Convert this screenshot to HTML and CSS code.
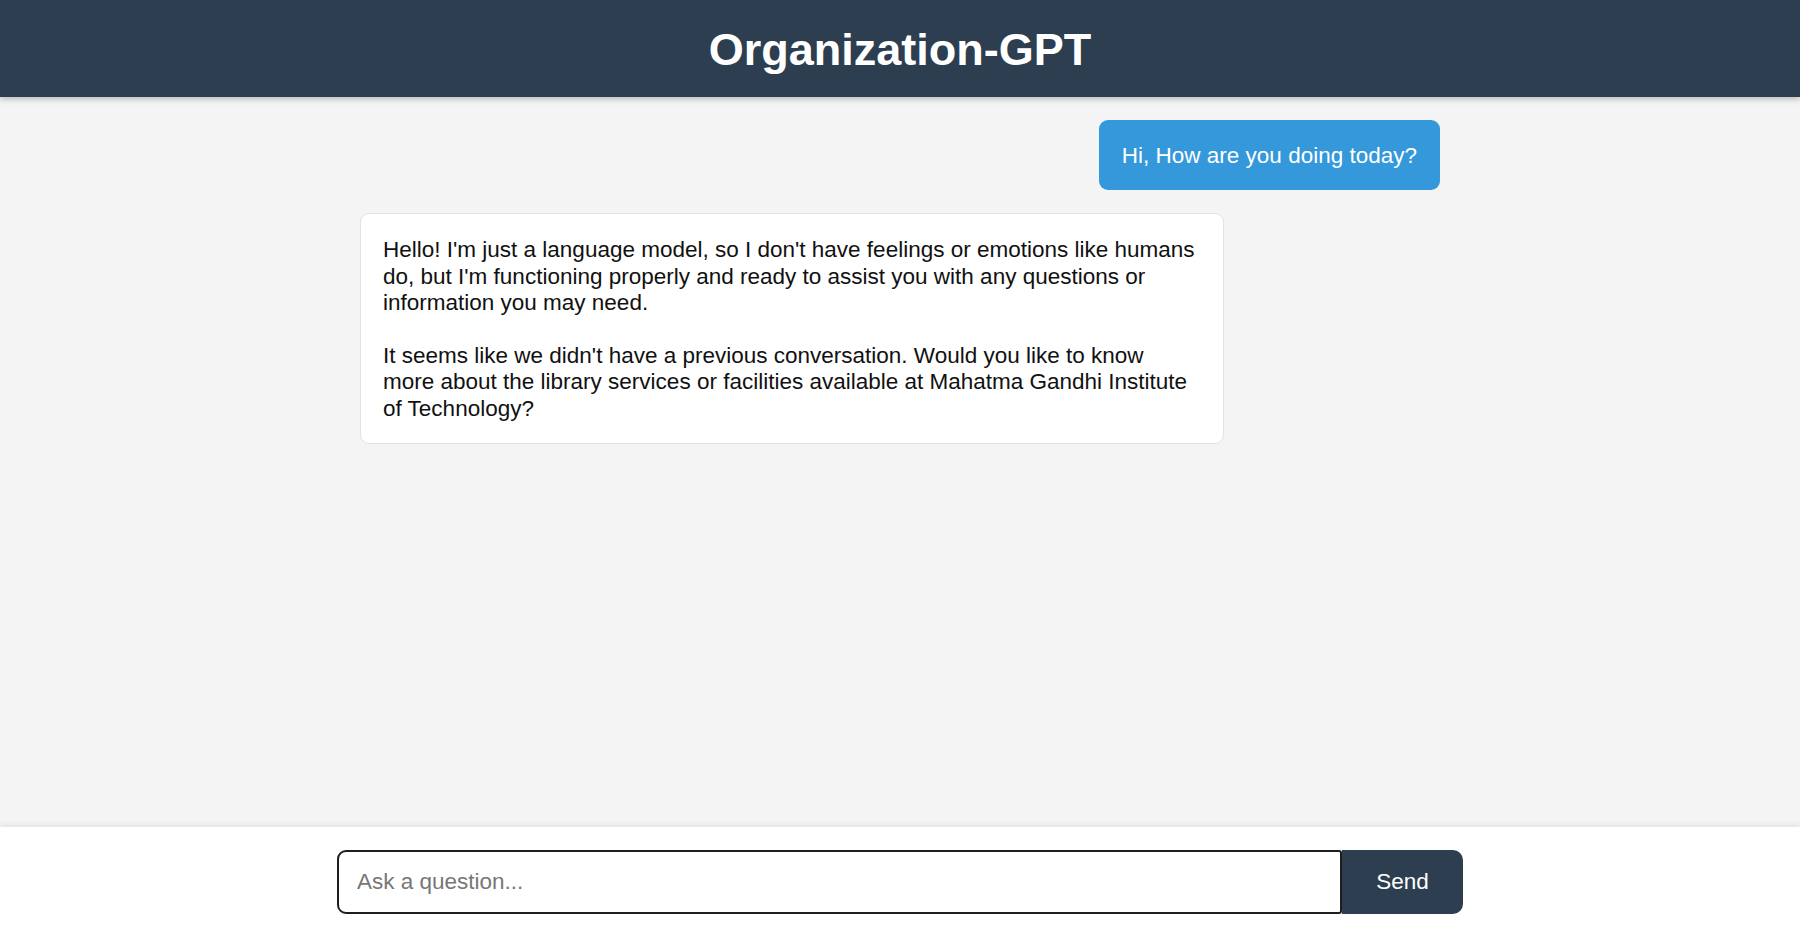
FILE: index.html
```html
<!DOCTYPE html>
<html lang="en">
<head>
<meta charset="utf-8">
<title>Organization-GPT</title>
<link rel="stylesheet" href="styles.css">
</head>
<body>
<div class="app">
  <header class="header">
    <h1 class="title">Organization-GPT</h1>
  </header>
  <main class="chat">
    <div class="messages">
      <div class="msg msg-user">Hi, How are you doing today?</div>
      <div class="msg msg-bot">
        <p>Hello! I'm just a language model, so I don't have feelings or emotions like humans do, but I'm functioning properly and ready to assist you with any questions or information you may need.</p>
        <p>It seems like we didn't have a previous conversation. Would you like to know more about the library services or facilities available at Mahatma Gandhi Institute of Technology?</p>
      </div>
    </div>
  </main>
  <footer class="composer">
    <form class="form">
      <input class="input" type="text" placeholder="Ask a question...">
      <button class="send" type="button">Send</button>
    </form>
  </footer>
</div>
</body>
</html>
```
FILE: styles.css
```css
* { box-sizing: border-box; }
html, body { margin: 0; padding: 0; height: 100%; }
body {
  font-family: Arial, "Liberation Sans", Helvetica, sans-serif;
  background: #f4f4f4;
  color: #111;
}
.app {
  height: 930px;
  display: flex;
  flex-direction: column;
}
.header {
  flex: 0 0 97px;
  background: #2c3e50;
  display: flex;
  align-items: center;
  justify-content: center;
  box-shadow: 0 2px 6px rgba(0,0,0,0.25);
  position: relative;
  z-index: 2;
}
.title {
  margin: 0;
  color: #fff;
  font-size: 45px;
  font-weight: bold;
  line-height: 1;
  padding-top: 2px;
}
.chat {
  flex: 1;
  overflow: hidden;
  padding: 23px 0;
}
.messages {
  width: 1080px;
  margin: 0 auto;
  display: flex;
  flex-direction: column;
  gap: 23px;
}
.msg {
  max-width: 80%;
  font-size: 22.5px;
  line-height: 26.4px;
  border-radius: 9px;
}
.msg-user {
  align-self: flex-end;
  background: #3498db;
  color: #fff;
  padding: 23px 23px 21px;
}
.msg-bot {
  align-self: flex-start;
  background: #fff;
  border: 1px solid #e2e2e2;
  color: #111;
  padding: 23px 22px 21px;
}
.msg-bot p {
  margin: 0 0 26.4px;
}
.msg-bot p:last-child {
  margin-bottom: 0;
}
.composer {
  flex: 0 0 103px;
  background: #fff;
  box-shadow: 0 -2px 6px rgba(0,0,0,0.08);
  padding-top: 23px;
  position: relative;
  z-index: 2;
}
.form {
  width: 1126px;
  margin: 0 auto;
  display: flex;
  height: 64px;
}
.input {
  flex: 1;
  height: 64px;
  border: 2px solid #1e1e1e;
  border-radius: 9px 3px 3px 9px;
  padding: 0 18px;
  font-family: Arial, "Liberation Sans", sans-serif;
  font-size: 22.5px;
  color: #111;
  outline: none;
  background: #fff;
}
.input::placeholder { color: #777; }
.send {
  flex: 0 0 121px;
  height: 64px;
  border: none;
  background: #2c3e50;
  color: #fff;
  font-family: Arial, "Liberation Sans", sans-serif;
  font-size: 22.5px;
  border-radius: 0 10px 10px 0;
  cursor: pointer;
}
```
